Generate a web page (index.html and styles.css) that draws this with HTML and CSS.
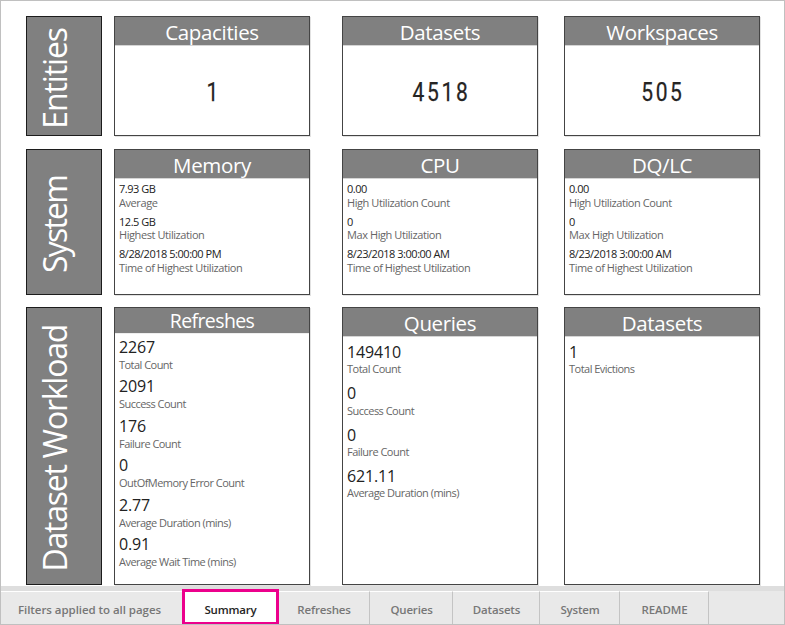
FILE: index.html
```html
<!DOCTYPE html>
<html lang="en">
<head>
<meta charset="utf-8">
<title>Summary</title>
<link rel="stylesheet" href="styles.css">
</head>
<body>
<div class="app">
<main class="report">
  <div class="group"><span class="t-entities">Entities</span></div>
  <section class="card"><h2>Capacities</h2><div class="big"><span>1</span></div></section>
  <section class="card"><h2>Datasets</h2><div class="big"><span>4518</span></div></section>
  <section class="card"><h2>Workspaces</h2><div class="big"><span>505</span></div></section>

  <div class="group"><span class="t-system">System</span></div>
  <section class="card"><h2>Memory</h2>
    <dl class="small">
      <div><dt>7.93 GB</dt><dd>Average</dd></div>
      <div><dt>12.5 GB</dt><dd>Highest Utilization</dd></div>
      <div><dt>8/28/2018 5:00:00 PM</dt><dd>Time of Highest Utilization</dd></div>
    </dl></section>
  <section class="card"><h2>CPU</h2>
    <dl class="small">
      <div><dt>0.00</dt><dd>High Utilization Count</dd></div>
      <div><dt>0</dt><dd>Max High Utilization</dd></div>
      <div><dt>8/23/2018 3:00:00 AM</dt><dd>Time of Highest Utilization</dd></div>
    </dl></section>
  <section class="card"><h2>DQ/LC</h2>
    <dl class="small">
      <div><dt>0.00</dt><dd>High Utilization Count</dd></div>
      <div><dt>0</dt><dd>Max High Utilization</dd></div>
      <div><dt>8/23/2018 3:00:00 AM</dt><dd>Time of Highest Utilization</dd></div>
    </dl></section>

  <div class="group"><span class="t-workload">Dataset Workload</span></div>
  <section class="card"><h2 class="compact">Refreshes</h2>
    <dl class="refreshes">
      <div><dt>2267</dt><dd>Total Count</dd></div>
      <div><dt>2091</dt><dd>Success Count</dd></div>
      <div><dt>176</dt><dd>Failure Count</dd></div>
      <div><dt>0</dt><dd>OutOfMemory Error Count</dd></div>
      <div><dt>2.77</dt><dd>Average Duration (mins)</dd></div>
      <div><dt>0.91</dt><dd>Average Wait Time (mins)</dd></div>
    </dl></section>
  <section class="card"><h2>Queries</h2>
    <dl class="queries">
      <div><dt>149410</dt><dd>Total Count</dd></div>
      <div><dt>0</dt><dd>Success Count</dd></div>
      <div><dt>0</dt><dd>Failure Count</dd></div>
      <div><dt>621.11</dt><dd>Average Duration (mins)</dd></div>
    </dl></section>
  <section class="card"><h2>Datasets</h2>
    <dl class="queries">
      <div><dt>1</dt><dd>Total Evictions</dd></div>
    </dl></section>
</main>
<nav class="tabs">
  <span class="tab filters">Filters applied to all pages</span>
  <span class="tab active">Summary</span>
  <span class="tab refreshes-tab">Refreshes</span>
  <span class="tab queries-tab">Queries</span>
  <span class="tab datasets-tab">Datasets</span>
  <span class="tab system-tab">System</span>
  <span class="tab readme-tab">README</span>
</nav>
</div>
</body>
</html>
```
FILE: styles.css
```css
* { box-sizing: border-box; }
body { margin: 0; background: #fff; font-family: "Open Sans", "Noto Sans", sans-serif; }
.app {
  width: 785px; height: 625px; overflow: hidden;
  border: 1px solid #c0c0c0;
  display: flex; flex-direction: column;
}
.report {
  height: 585px; flex: none;
  padding: 15px 0 0 25px;
  display: grid;
  column-gap: 12px;
  grid-template-columns: 76px 196px 8px 196px 2px 196px;
  grid-template-rows: 133px 158px 278px;
}
.report > :nth-child(4n+1) { grid-column: 1; }
.report > :nth-child(4n+2) { grid-column: 2; }
.report > :nth-child(4n+3) { grid-column: 4; }
.report > :nth-child(4n+4) { grid-column: 6; }
.report > * { height: 120px; }
.report > :nth-child(n+5) { height: 146px; }
.report > :nth-child(n+9) { height: 278px; }
.group {
  background: #808080; border: 1px solid #1c1c1c;
  color: #fff; display: flex; align-items: center; justify-content: center;
}
.group span {
  writing-mode: vertical-rl; transform: rotate(180deg);
  font-size: 32px; line-height: 40px; white-space: nowrap;
  margin-right: 18px; margin-top: 5px;
}
.t-entities { letter-spacing: -1.1px; }
.t-system { letter-spacing: -1.8px; }
.t-workload { letter-spacing: -1.25px; }
.card { border: 1px solid #444; background: #fff; box-shadow: 1px 1px 0 #e2e2e2; }
h2 {
  margin: 0; height: 29px; background: #808080; border-bottom: 1px solid #d5d5d5;
  color: #fff; font-size: 20.5px; font-weight: 400; line-height: 30px; text-align: center;
  letter-spacing: -0.35px;
}
h2.compact { height: 26px; font-size: 19.5px; line-height: 26px; border-bottom-color: #eee; letter-spacing: -0.6px; }
.big {
  font-family: Roboto, sans-serif; font-size: 25px; color: #252423;
  text-align: center; line-height: 94px;
}
.big span { display: inline-block; transform: scaleX(.84); letter-spacing: 3.2px; margin-right: -2.5px; -webkit-text-stroke: .25px #252423; }
dl { margin: 0; padding: 0 0 0 4px; white-space: nowrap; }
dt, dd { margin: 0; }
dt { color: #222; }
dd { color: #666; font-size: 11px; letter-spacing: -0.42px; line-height: 14px; }
.small { padding-top: 3px; }
.small > div { height: 32.5px; }
.small > div:nth-child(2) dd { margin-top: -1px; }
.small dt { font-size: 11px; line-height: 14px; letter-spacing: -0.47px; }
.refreshes { padding-top: 3px; }
.refreshes > div { height: 39.4px; }
.refreshes dt, .queries dt { font-size: 16px; line-height: 21px; letter-spacing: -0.15px; }
.refreshes dd { letter-spacing: -0.53px; }
.queries { padding-top: 5px; }
.queries dt { line-height: 20.3px; }
.queries dd { letter-spacing: -0.52px; }
.queries > div { height: 41.4px; }
.tabs {
  height: 38px; flex: none; background: #e9e9e9; display: flex;
  border-top: 5px solid #dedede; position: relative;
}
.tab {
  height: 33px; border-top: 1px solid #fff; border-right: 1px solid #c4c4c4;
  font-size: 11.5px; font-weight: 600; line-height: 35px; text-align: center;
  color: #777; white-space: nowrap; letter-spacing: -0.17px;
}
.filters { width: 181px; border-right: 0; padding-right: 4px; letter-spacing: -0.05px; }
.active {
  width: 97px; height: 36px; margin-top: -2px; background: #fff; color: #252423;
  border: 3px solid #ec008c; line-height: 35px;
}
.refreshes-tab { width: 91px; }
.queries-tab { width: 83px; padding-left: 1px; }
.datasets-tab { width: 87px; padding-left: 1px; }
.system-tab { width: 80px; padding-left: 1px; }
.readme-tab { width: 89px; padding-left: 1px; }
```
